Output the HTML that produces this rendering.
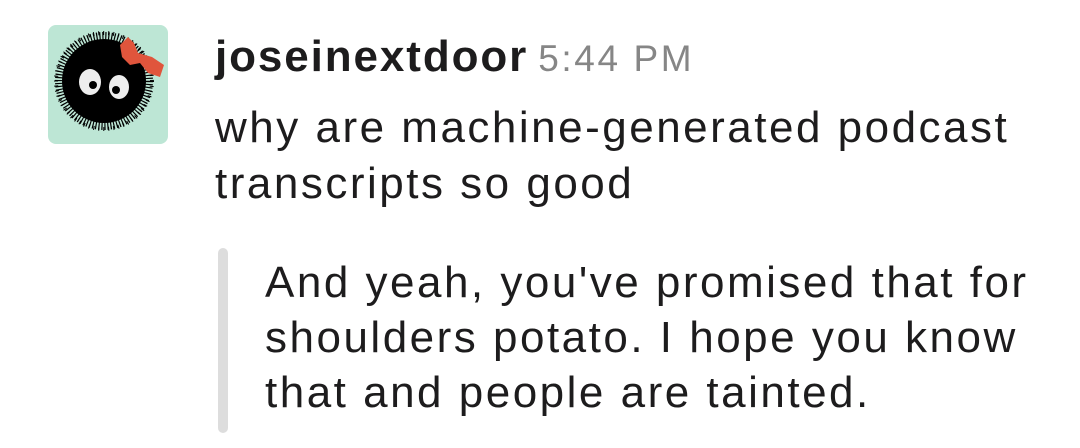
<!DOCTYPE html>
<html><head><style>
body{margin:0;width:1080px;height:448px;background:#fff;position:relative;overflow:hidden;font-family:"Liberation Sans",sans-serif;color:#1d1c1d}
.av{position:absolute;left:48px;top:25px;width:120px;height:119px;border-radius:8px;background:#bde6d5;overflow:hidden}
.name{position:absolute;left:215px;top:32px;font-size:44px;font-weight:bold;white-space:nowrap;letter-spacing:1.9px}
.name span{font-weight:normal;color:#868686;font-size:37px;margin-left:10px;letter-spacing:2.6px}
.msg{position:absolute;left:215px;top:100px;font-size:44px;line-height:56px;white-space:nowrap;letter-spacing:2.5px}
.bar{position:absolute;left:218px;top:248px;width:10px;height:185px;border-radius:5px;background:#dddddd}
.q{position:absolute;left:265px;top:255px;font-size:44px;line-height:55px;white-space:nowrap;letter-spacing:2.5px}
</style></head><body>
<div class="av"><svg width="120" height="119" viewBox="0 0 120 119">
<circle cx="56" cy="56" r="42" fill="#000"/>
<circle cx="56" cy="56" r="45" fill="none" stroke="#000" stroke-width="8" stroke-dasharray="1.2 1.8"/>
<circle cx="56" cy="56" r="48" fill="none" stroke="#000" stroke-width="4" stroke-dasharray="1 4"/>
<ellipse cx="42" cy="57" rx="11" ry="13" fill="#eee"/><circle cx="45" cy="60" r="4" fill="#000"/>
<ellipse cx="71" cy="62" rx="10" ry="12" fill="#eee"/><circle cx="68" cy="65" r="4" fill="#000"/>
<path fill="#e0553c" d="M72 20 L80 12 L86 18 L90 28 L104 32 L116 40 L112 52 L100 48 L92 38 L82 40 L74 32 Z"/>
</svg></div>
<div class="name">joseinextdoor<span>5:44 PM</span></div>
<div class="msg">why are machine-generated podcast<br>transcripts so good</div>
<div class="bar"></div>
<div class="q">And yeah, you've promised that for<br>shoulders potato. I hope you know<br>that and people are tainted.</div>
</body></html>
